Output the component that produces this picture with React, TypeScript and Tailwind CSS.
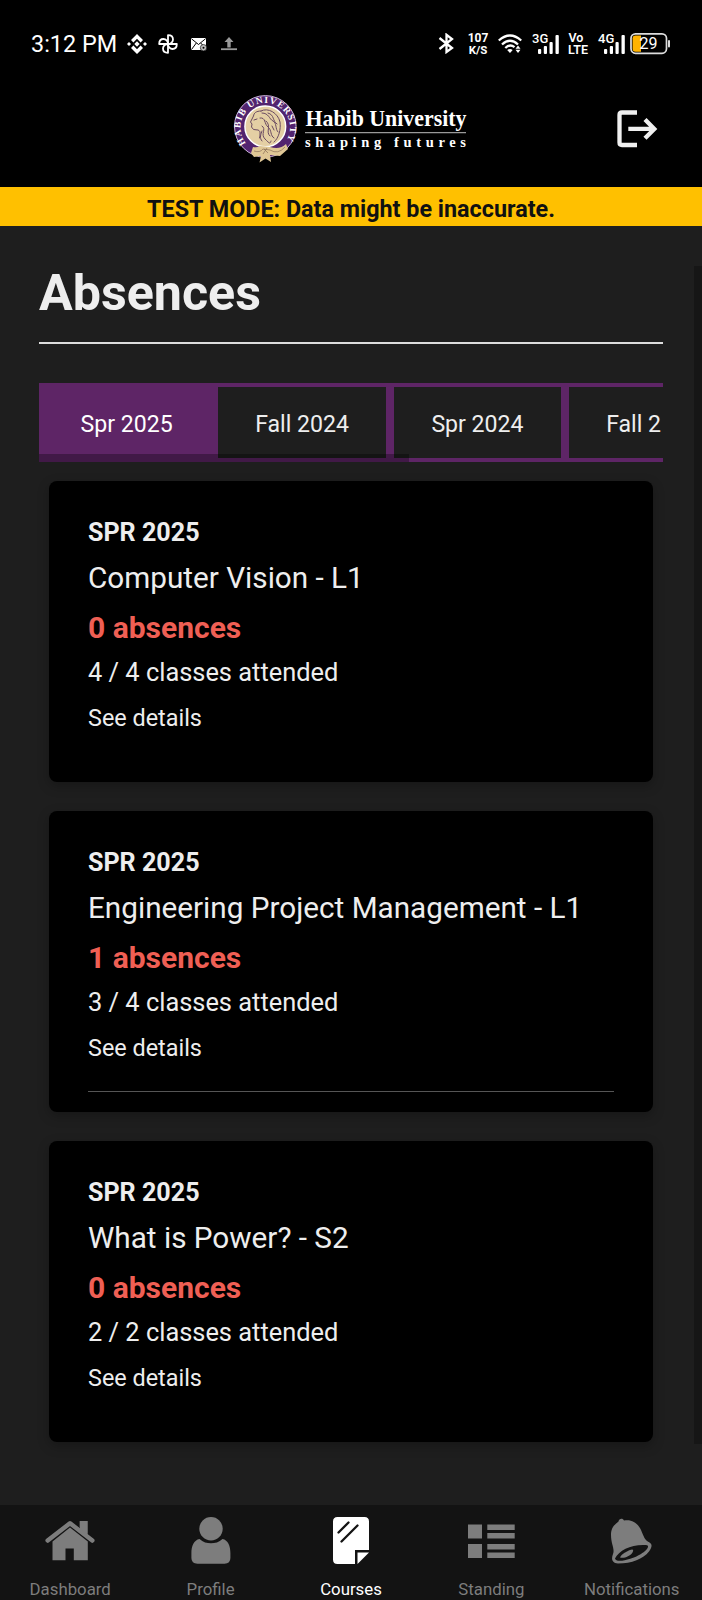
import React from "react";

function StatusBar() {
  return (
    <div className="flex h-[86px] items-start pl-[31px] pr-[30px] pt-[32px] text-white">
      <div className="h-6 w-[96px] whitespace-nowrap text-[23.4px] leading-[25px]">3:12 PM</div>
      <svg className="mt-0.5 h-5 w-5" viewBox="0 0 20 20" fill="currentColor">
        <path d="M10 0 16 6 13.6 8.4 10 4.8 6.4 8.4 4 6Z" />
        <path d="M10 20 16 14 13.6 11.6 10 15.2 6.4 11.6 4 14Z" />
        <path d="M10 7.3 12.7 10 10 12.7 7.3 10Z" />
        <path d="M2 8 4 10 2 12 0 10Z M18 8 20 10 18 12 16 10Z" />
      </svg>
      <svg className="ml-[11px] mt-0.5 h-5 w-5" viewBox="0 0 20 20" fill="none" stroke="currentColor" strokeWidth="1.8" strokeLinejoin="round">
        <path d="M10 10V1.2C13.5 1.2 15 3.3 15 5.5S13 10 10 10Z" />
        <path d="M10 10H18.8C18.8 13.5 16.7 15 14.5 15S10 13 10 10Z" />
        <path d="M10 10V18.8C6.5 18.8 5 16.7 5 14.5S7 10 10 10Z" />
        <path d="M10 10H1.2C1.2 6.5 3.3 5 5.5 5S10 7 10 10Z" />
      </svg>
      <svg className="ml-[13px] mt-[6px] h-[13px] w-4" viewBox="0 0 16 13">
        <rect width="15" height="12" rx="1" fill="#fff" />
        <path d="M.5 .8 7.5 6.5 14.5 .8M.5 11.5 5.3 5M14.5 10 9.7 5" fill="none" stroke="#000" strokeWidth="1" />
        <circle cx="12.5" cy="9.7" r="3.2" fill="#bbb" stroke="#000" strokeWidth=".6" />
        <circle cx="12.5" cy="9.7" r="1" fill="#000" />
      </svg>
      <svg className="ml-[14px] mt-[5px] h-[14px] w-4" viewBox="0 0 16 14" fill="#999">
        <path d="M8 0 12.5 5H9.7V10.5H6.3V5H3.5Z" />
        <rect y="11.3" width="16" height="1.8" />
      </svg>
      <div className="grow" />
      <svg className="mt-px h-[21px] w-[17px]" viewBox="0 0 17 21" fill="none" stroke="currentColor" strokeWidth="2.3">
        <path d="M1.500 5 14 15 8.500 19V1.800L14 6 1.500 16" />
      </svg>
      <div className="ml-[11px] w-6 whitespace-nowrap text-center text-[12px] font-bold leading-[12px]">
        <div>107</div>
        <div className="text-[11.5px]">K/S</div>
      </div>
      <svg className="ml-[8px] mr-px mt-0.5 h-5 w-6" viewBox="0 0 24 20" fill="none" stroke="currentColor" strokeWidth="2.3">
        <path d="M.8 6.500Q12-3.500 23.200 6.500M4 10.500Q12 3 20 10.500M7.300 14Q12 9.500 16.500 13.200" />
        <path d="M12 19 9.200 16.100Q12 13.800 14.700 16.100Z" fill="currentColor" stroke="none" />
        <path d="M20 11.500 22.500 14.700H17.500ZM20 19 22.500 15.800H17.500Z" fill="currentColor" stroke="none" />
      </svg>
      <Signal label="3G" />
      <div className="ml-[8px] w-[22px] whitespace-nowrap text-center text-[12.500px] font-semibold leading-[12px]">
        <div className="pr-1">Vo</div>
        <div>LTE</div>
      </div>
      <Signal label="4G" />
      <svg className="ml-[5px] h-[23px] w-[42px]" viewBox="0 0 42 23">
        <rect x="1" y="1.8" width="35.5" height="19.5" rx="4.5" fill="none" stroke="#ddd" strokeWidth="1.7" />
        <path d="M5.500 3.400H11V19.700H5.500Q2.600 19.700 2.600 16.800V6.300Q2.600 3.400 5.500 3.400Z" fill="#ffb300" />
        <path d="M39 9V14.500" stroke="#ddd" strokeWidth="2" strokeLinecap="round" />
        <text x="18.5" y="17" textAnchor="middle" fill="#fff" fontFamily="Roboto" fontSize="16">29</text>
      </svg>
    </div>
  );
}

function Signal({ label }: { label: string }) {
  return (
    <svg className="ml-[8px] h-[23px] w-7 overflow-visible" viewBox="0 0 28 23" fill="#fff">
      <text x="1" y="10.5" fontFamily="Roboto" fontWeight="500" fontSize="13">{label}</text>
      <rect x="7" y="17" width="3.2" height="5" rx="1" />
      <rect x="12.8" y="14" width="3.2" height="8" rx="1" />
      <rect x="18.5" y="10" width="3.2" height="12" rx="1" />
      <rect x="24.5" y="3" width="3.3" height="19" rx="1" />
    </svg>
  );
}

function Logo() {
  return (
    <svg className="h-[72px] w-[240px] shrink-0 overflow-visible" viewBox="232 92 240 72">
      <defs>
        <path id="ring" d="M246 143.300A24.800 24.800 0 1 1 284.600 143.300" />
      </defs>
      <circle cx="265.300" cy="126.400" r="30.800" fill="#52246f" stroke="#cbb4d8" strokeWidth="1" />
      <circle cx="265.300" cy="126.400" r="20.400" fill="#e4cfa4" stroke="#fff" strokeWidth="1.400" />
      <text fill="#fff" fontFamily="Liberation Serif" fontWeight="700" fontSize="9.500">
        <textPath href="#ring" textLength="107" lengthAdjust="spacing">HABIB UNIVERSITY</textPath>
      </text>
      <g fill="none" stroke="#6a4a62" strokeWidth="1" strokeLinecap="round">
        <path d="M261 111C256 111 254 113 253.500 116L250.500 122 252 124 251.500 127 253.500 129.500 258 130C261 131 260 134 259.500 138" />
        <path d="M261 111C268 107 278 113 280 122C281 129 279 138 274 142" />
        <path d="M262 113C269 113 269 119 273 121S275 129 278 132" />
        <path d="M260 118C266 117 264 124 268 127S270 136 274 138" />
        <path d="M262 126C267 129 260 134 265 139S270 144 271 141" />
        <path d="M268 113C275 115 272 121 277 124M266 121C272 126 265 132 270 136M254 120 257 119M262 141C259 138 261 134 262 131M272 126 274 130" />
      </g>
      <path d="M253 147Q257 148 260 146L270 147Q280 150 286 144L288 149 280 156 270 155 271 162 265.500 158.500 259.500 162.500 261 156 254 157 251 153Z" fill="#dfc796" />
      <path d="M254 151Q260 153 263 149L270 150Q278 155 285 147M264 149 268 153M267 148 263 154" fill="none" stroke="#8a6f58" strokeWidth=".7" />
      <text x="305.500" y="125.500" textLength="161" lengthAdjust="spacingAndGlyphs" fill="#fff" fontFamily="Liberation Serif" fontWeight="700" fontSize="24">Habib University</text>
      <path d="M305 132.700H466" stroke="#999" strokeWidth="1.200" />
      <text x="305" y="146.700" textLength="161" lengthAdjust="spacing" fill="#fff" fontFamily="Liberation Serif" fontWeight="700" fontSize="14.500">shaping futures</text>
    </svg>
  );
}

const terms = ["Spr 2025", "Fall 2024", "Spr 2024", "Fall 2"];

const courses = [
  { title: "Computer Vision - L1", missed: 0, attended: "4 / 4", divider: false },
  { title: "Engineering Project Management - L1", missed: 1, attended: "3 / 4", divider: true },
  { title: "What is Power? - S2", missed: 0, attended: "2 / 2", divider: false },
];

function CourseCard({ title, missed, attended, divider }: (typeof courses)[number]) {
  return (
    <article className="flex h-[301px] flex-col whitespace-nowrap rounded-[8px] bg-black px-[39px] pt-[36px] text-[#eee] shadow-[0_4px_12px_rgba(0,0,0,0.25)]">
      <p className="h-[42px] text-[25.1px] font-bold leading-8">SPR 2025</p>
      <h2 className="h-[50px] text-[29.7px] leading-[38px]">{title}</h2>
      <p className="h-[47px] text-[30px] font-bold leading-[37px] text-[#ef5f54]">{missed} absences</p>
      <p className="h-[46px] text-[25.4px] leading-8">{attended} classes attended</p>
      <a className="text-[23.4px] leading-8">See details</a>
      {divider && <hr className="mt-[27px] border-t border-[#555]" />}
    </article>
  );
}

const icons: Record<string, React.ReactNode> = {
  Dashboard: (
    <>
      <path d="M31.800 4H39.500V20H31.800Z" />
      <path d="M-.3 24.500 22 6.500 44.300 24.500" fill="none" stroke="#131313" strokeWidth="8" strokeLinejoin="round" transform="translate(0 1.200)" />
      <path d="M31.800 4H39.500V18L31.800 12Z" />
      <path d="M-.3 23.500 22 6.300 44.300 23.500" fill="none" stroke="currentColor" strokeWidth="4.500" strokeLinecap="round" strokeLinejoin="round" />
      <path d="M22 10.600 39.800 24.500V43.200H25.800V31.500H17.500V43.200H4.500V24.500Z" />
    </>
  ),
  Profile: (
    <>
      <circle cx="22" cy="11.700" r="11.700" />
      <path d="M10.500 22C14 25.300 18 26.300 22 26.300S30 25.300 33.500 22C39 23 41.400 29 41.400 36V41Q41.400 46.700 35.500 46.700H8.500Q2.400 46.700 2.400 41V36C2.400 29 5 23 10.500 22Z" />
    </>
  ),
  Courses: (
    <>
      <path d="M8.500 0H35.500Q40 0 40 4.500V33H26V47H8.500Q4 47 4 42.500V4.500Q4 0 8.500 0Z" />
      <path d="M28.500 35.500H40L28.500 47Z" />
      <path d="M9.500 15.500 19.500 5.500M12.500 24.500 28.500 8.500" fill="none" stroke="#131313" strokeWidth="2.300" strokeLinecap="round" />
    </>
  ),
  Standing: (
    <path transform="translate(.5 0)" d="M-1.500 7.500H12.500V21.500H-1.500Z M-1.500 27H12.500V41H-1.500Z M17.800 7.500H45.200V13H17.800Z M17.800 16H45.200V21.500H17.800Z M17.800 27H45.200V32.500H17.800Z M17.800 35.500H45.200V41H17.800Z" />
  ),
  Notifications: (
    <>
      <path fillRule="evenodd" d="M8.500 4.500C9 1 13 1 14 3.500C23 2 28 7 31 13C34 20 34.500 23 39.500 25.500C43 27.500 41.500 31 39 34.500C33 42 22 46.500 8 46.500C2 46 1 42 3 37C5 32 1 27 1 18C1 11 4 8 8.500 4.500Z M5 41.500C9 33 22 27 36 28C41 28.500 36 34 31 37C22 42.500 6 46.500 5 41.500Z" />
      <path d="M10 40.500C12 36.500 17 34.500 20 33C23 31.500 24 33 22.500 35.500C20 39.500 14 41.500 10 40.500Z" />
    </>
  ),
};

const tabs = ["Dashboard", "Profile", "Courses", "Standing", "Notifications"];

export default function App() {
  return (
    <div className="flex h-[1600px] w-[702px] flex-col overflow-hidden bg-[#1e1e1e] font-['Roboto',sans-serif]">
      <header className="h-[187px] shrink-0 bg-black">
        <StatusBar />
        <div className="flex items-start justify-between pl-[232px] pr-[44px] pt-[6px]">
          <Logo />
          <svg className="mt-[16px] h-[42px] w-[42px]" viewBox="0 0 42 42" fill="none" stroke="#f0f0f0" strokeWidth="4.300">
            <path d="M21 4.500H6Q3.500 4.500 3.500 7V34.500Q3.500 37 6 37H21M12.300 20.900H38M29 11.500 38.300 20.900 29 30.300" />
          </svg>
        </div>
      </header>
      <div className="h-[39px] shrink-0 bg-[#ffc000] pt-[2px] text-center text-[23.35px] font-bold leading-[40px] text-[#111]">
        TEST MODE: Data might be inaccurate.
      </div>
      <div className="flex min-h-0 grow">
        <main className="flex w-[694px] flex-col pl-[39px] pr-[31px] pt-[36px]">
          <h1 className="h-[80px] text-[50.2px] font-bold leading-[62px] text-[#eee]">Absences</h1>
          <hr className="border-t-2 border-[#ddd]" />
          <div className="relative mt-[39px] flex h-[79px] shrink-0 overflow-hidden">
            {terms.map((term, i) => (
              <div key={term} className={`flex w-[175.4px] shrink-0 items-center border-4 border-[#5e2566] text-[23.1px] ${i === 0 ? "bg-[#5e2566] text-white" : "text-[#eee]"} ${i === 3 ? "pl-[37px]" : "justify-center"}`}>
                <span className="whitespace-nowrap pt-[5px]">{term}</span>
              </div>
            ))}
            <div className="absolute bottom-0 left-0 h-2 w-[370px] bg-black/30" />
          </div>
          <div className="flex flex-col gap-[29px] px-[10px] pt-[19px]">
            {courses.map((course) => <CourseCard key={course.title} {...course} />)}
          </div>
        </main>
        <div className="mt-[40px] h-[1178px] w-2 bg-[#161616]" />
      </div>
      <nav className="grid h-[95px] shrink-0 grid-cols-5 bg-[#131313] pt-[12px]">
        {tabs.map((tab) => (
          <div key={tab} className={`flex flex-col items-center ${tab === "Courses" ? "text-white" : "text-[#7d7d7d]"}`}>
            <svg className="h-12 w-11 overflow-visible" viewBox="0 0 44 48" fill="currentColor">{icons[tab]}</svg>
            <span className="mt-[12px] text-[16.8px] leading-[24px]">{tab}</span>
          </div>
        ))}
      </nav>
    </div>
  );
}
